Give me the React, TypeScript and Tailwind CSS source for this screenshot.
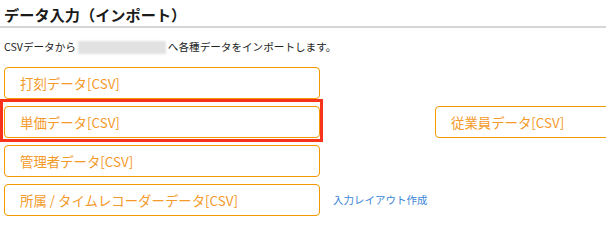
const btn =
  "flex h-[32px] w-[316px] shrink-0 items-center rounded-[4px] border border-[#f39800] bg-white pl-[15px] text-[13.4px] text-[#f39a2a]";

export default function App() {
  return (
    <div
      className="relative h-[220px] w-[606px] overflow-hidden bg-white text-[#222]"
      style={{ fontFamily: '"Noto Sans CJK JP", "Noto Sans", sans-serif' }}
    >
      <h2 className="pl-1 pt-[4px] text-[15.2px] font-bold leading-[20px] text-[#1a1a1a]">
        データ入力（インポート）
      </h2>
      <div className="mt-[2px] h-[2px] bg-[#d6d6d6]" />

      <p className="mt-[12px] flex h-[14px] items-center pl-1 text-[10.6px] leading-[14px] text-[#222]">
        CSVデータから
        <span className="mx-[2px] h-[13px] w-[88px] bg-[#e2e2e2] blur-[1px]" />
        へ各種データをインポートします。
      </p>

      <div className="mt-[13px] flex flex-col gap-[7px] pl-1">
        <div className="flex items-center">
          <button className={btn}>打刻データ[CSV]</button>
        </div>
        <div className="flex items-center">
          <button className={btn}>単価データ[CSV]</button>
          <button className={`${btn} ml-[115px]`}>従業員データ[CSV]</button>
        </div>
        <div className="flex items-center">
          <button className={btn}>管理者データ[CSV]</button>
        </div>
        <div className="flex items-center">
          <button className={btn}>所属 / タイムレコーダーデータ[CSV]</button>
          <a className="ml-[13px] text-[10.5px] text-[#3a86d8]">入力レイアウト作成</a>
        </div>
      </div>

      {/* highlight frame */}
      <div className="pointer-events-none absolute left-0 top-[99px] h-[43px] w-[323px] border-[3px] border-[#f8331c]" />
    </div>
  );
}
